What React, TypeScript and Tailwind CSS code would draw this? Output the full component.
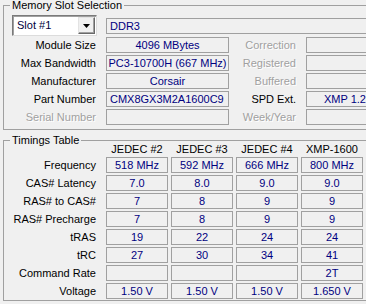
import { ReactNode } from 'react';

const slotRows = [
  { label: 'Module Size', value: '4096 MBytes', side: 'Correction', sideValue: '', dim: false, sideDim: true, left: false },
  { label: 'Max Bandwidth', value: 'PC3-10700H (667 MHz)', side: 'Registered', sideValue: '', dim: false, sideDim: true, left: false },
  { label: 'Manufacturer', value: 'Corsair', side: 'Buffered', sideValue: '', dim: false, sideDim: true, left: false },
  { label: 'Part Number', value: 'CMX8GX3M2A1600C9', side: 'SPD Ext.', sideValue: 'XMP 1.2', dim: false, sideDim: false, left: true },
  { label: 'Serial Number', value: '', side: 'Week/Year', sideValue: '', dim: true, sideDim: true, left: false },
];

const columns = ['JEDEC #2', 'JEDEC #3', 'JEDEC #4', 'XMP-1600'];

const timings = [
  { label: 'Frequency', values: ['518 MHz', '592 MHz', '666 MHz', '800 MHz'] },
  { label: 'CAS# Latency', values: ['7.0', '8.0', '9.0', '9.0'] },
  { label: 'RAS# to CAS#', values: ['7', '8', '9', '9'] },
  { label: 'RAS# Precharge', values: ['7', '8', '9', '9'] },
  { label: 'tRAS', values: ['19', '22', '24', '24'] },
  { label: 'tRC', values: ['27', '30', '34', '41'] },
  { label: 'Command Rate', values: ['', '', '', '2T'] },
  { label: 'Voltage', values: ['1.50 V', '1.50 V', '1.50 V', '1.650 V'] },
];

function Label({ children, dim, className = '' }: { children: ReactNode; dim?: boolean; className?: string }) {
  return (
    <div
      className={`text-right whitespace-nowrap leading-[16px] ${
        dim ? 'text-[#a0a0a0] [text-shadow:1px_1px_0_#fff]' : 'text-black'
      } ${className}`}
    >
      {children}
    </div>
  );
}

function Field({ children, left, className = '' }: { children?: ReactNode; left?: boolean; className?: string }) {
  return (
    <div
      className={`h-[16px] border border-[#a0a0a0] text-[#000080] leading-[14px] whitespace-nowrap overflow-hidden ${
        left ? 'text-left pl-[3px]' : 'text-center'
      } ${className}`}
    >
      {children}
    </div>
  );
}

function GroupBox({ title, children, className = '' }: { title: string; children: ReactNode; className?: string }) {
  return (
    <fieldset className={`border border-[#a0a0a0] p-0 ${className}`}>
      <legend className="ml-[6px] px-[2px] leading-[9px] text-black">{title}</legend>
      {children}
    </fieldset>
  );
}

export default function App() {
  return (
    <div className="w-[366px] h-[304px] overflow-hidden bg-[#f0f0f0] font-['Liberation_Sans',Arial,sans-serif] text-[11px]">
      <div className="w-[420px] pl-[3px]">
        <GroupBox title="Memory Slot Selection" className="mt-[1px] h-[129px]">
          <div className="pt-[5px] flex flex-col">
            <div className="flex items-center">
              {/* slot combo */}
              <div className="ml-[8px] w-[85px] h-[21px] flex bg-white border border-[#7a7a7a] border-b-[#dcdcdc] border-r-[#dcdcdc] shadow-[inset_1px_1px_0_#a0a0a0]">
                <div className="flex-1 pl-[4px] leading-[19px] text-[#000040]">Slot #1</div>
                <div className="w-[17px] h-[17px] mt-[1px] mr-[1px] bg-[#f0f0f0] border border-t-[#e3e3e3] border-l-[#e3e3e3] border-b-[#696969] border-r-[#696969] shadow-[inset_-1px_-1px_0_#a0a0a0] flex items-center justify-center">
                  <svg width="7" height="4" viewBox="0 0 7 4">
                    <path d="M0 0h7L3.5 4z" fill="#000" />
                  </svg>
                </div>
              </div>
              <Field left className="ml-[9px] flex-1">DDR3</Field>
            </div>
            <div className="mt-[1px] flex flex-col gap-[2px]">
              {slotRows.map((r) => (
                <div key={r.label} className="flex items-center">
                  <Label dim={r.dim} className="w-[92px]">{r.label}</Label>
                  <Field left={r.left} className="ml-[10px] w-[123px]">{r.value}</Field>
                  <Label dim={r.sideDim} className="w-[67px]">{r.side}</Label>
                  <Field className="ml-[10px] w-[78px]">{r.sideValue}</Field>
                </div>
              ))}
            </div>
          </div>
        </GroupBox>

        <GroupBox title="Timings Table" className="mt-[6px] h-[165px]">
          <div className="flex flex-col">
            <div className="flex h-[13px] -mt-[2px]">
              <div className="w-[102px]" />
              <div className="grid grid-cols-[62px_62px_62px_62px] gap-x-[3px]">
                {columns.map((c) => (
                  <div key={c} className="text-center leading-[13px] text-black whitespace-nowrap">{c}</div>
                ))}
              </div>
            </div>
            <div className="mt-[1px] flex flex-col gap-[2px]">
              {timings.map((t) => (
                <div key={t.label} className="flex items-center">
                  <Label className="w-[92px]">{t.label}</Label>
                  <div className="ml-[10px] grid grid-cols-[62px_62px_62px_62px] gap-x-[3px]">
                    {t.values.map((v, i) => (
                      <Field key={i}>{v}</Field>
                    ))}
                  </div>
                </div>
              ))}
            </div>
          </div>
        </GroupBox>
      </div>
    </div>
  );
}
